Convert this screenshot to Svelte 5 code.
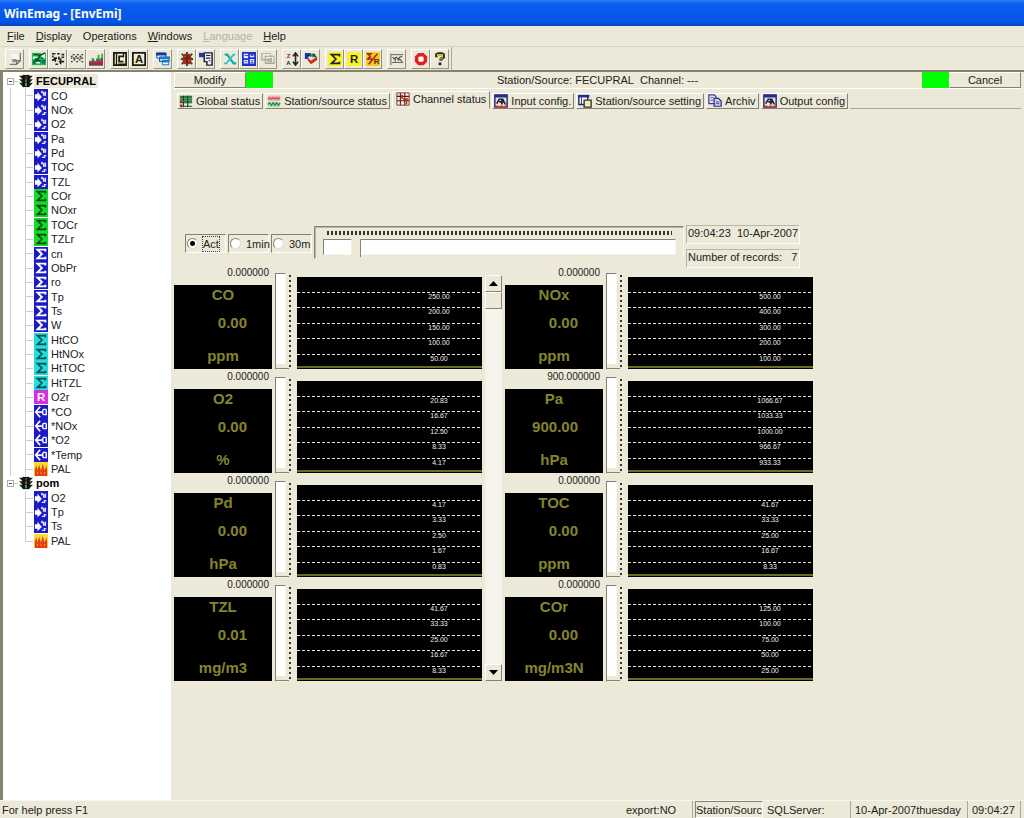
<script lang="ts">
  type Shape = { d?: string; fill?: string; stroke?: string; w?: number; t?: string; x?: number; y?: number; size?: number };

  // all icons are drawn on a 16x16 grid
  const icons: Record<string, Shape[]> = {
    page: [
      { d: 'M3 2H14V11L11 14H3Z', fill: '#f6f4ec' },
      { d: 'M14 1V10L10 14H2M10 14V10H14', stroke: '#555', w: 1.2 },
      { d: 'M4 9H8V11H5M8 10L10 9', stroke: '#777', w: 1.5 }
    ],
    station: [
      { d: 'M0 1H16V15H0Z', fill: '#1fb84c' },
      { d: 'M1 5H6V8H1ZM10 1H15V7H11ZM5 11H9V13H5Z', fill: '#e2f8e4' },
      { d: 'M2 3H7L9 5L7 8H4V10H10M9 4L15 1M10 7H13', stroke: '#074a24', w: 1.6 },
      { d: 'M11 9H15V13H11ZM1 10H4V14H1Z', fill: '#0e6b6b' }
    ],
    nodes: [
      { d: 'M1 2H5M7 2H10M12 3H15M1 5H3M1 9H5V11M3 7H7M9 5V8H12M9 11H15M11 9V14M5 14H8M12 6H15', stroke: '#222', w: 1.8 }
    ],
    waves: [
      { d: 'M1 5H3M3 3H5M6 5H8M8 3H10M11 5H13M13 3H15M1 7H15M1 11H3M4 9H6M7 11H9M10 9H12M13 11H15', stroke: '#333', w: 1.6 },
      { d: 'M3 6V8M7 6V8M11 6V8', stroke: '#ece9d8', w: 1 }
    ],
    chart: [
      { d: 'M0 14V10H3V7H6V10H8V7H10V3H12V7H14V2H16V14Z', fill: '#2fae3b' },
      { d: 'M0 15V11H4V9H6V11H9V8H11V10H14V7H16V15Z', fill: '#a8285c' },
      { d: 'M0 15H16', stroke: '#444', w: 1 }
    ],
    floppy: [
      { d: 'M1 1H15V15H1Z', fill: '#f1eecb', stroke: '#1c1c14', w: 2 },
      { d: 'M4 1V15M12 1V6', stroke: '#1c1c14', w: 1.5 },
      { d: 'M12 5H7V11H12M6 14H14', stroke: '#1c1c14', w: 2 }
    ],
    floppyA: [
      { d: 'M1 1H15V15H1Z', fill: '#f1eecb', stroke: '#1c1c14', w: 2 },
      { t: 'A', x: 8, y: 13, size: 13, fill: '#1c1c14' }
    ],
    cascade: [
      { d: 'M1 1H11V7H1Z', fill: '#fff', stroke: '#113b9b', w: 1 },
      { d: 'M0 1H12V4H0Z', fill: '#113b9b' },
      { d: 'M4 6H15V11H4Z', fill: '#8fe2ef', stroke: '#113b9b', w: 1 },
      { d: 'M4 5H16V8H4ZM7 9H15V15H7Z', fill: '#1a7bca' },
      { d: 'M8 13H14', stroke: '#e8ffff', w: 2 }
    ],
    bug: [
      { d: 'M2 2L5 5M14 2L11 5M1 8H15M2 14L5 11M14 14L11 11M8 0V16', stroke: '#263b18', w: 2 },
      { d: 'M5 2H11L13 6V11L11 14H5L3 11V6Z', fill: '#b32418' },
      { d: 'M8 4V13M4 7H12', stroke: '#293b19', w: 1.6 },
      { d: 'M5 5H6V6H5ZM10 9H11V10H10Z', fill: '#f99' }
    ],
    list: [
      { d: 'M6 1H15V15H9V11H6Z', fill: '#eee', stroke: '#223', w: 1.7 },
      { d: 'M8 4H13M8 7H13M11 10H13', stroke: '#225', w: 1.4 },
      { d: 'M0 1H6V6H0Z', fill: '#2239a8' }
    ],
    cross: [
      { d: 'M2 3H5L12 13H15', stroke: '#17a8b6', w: 2.6 },
      { d: 'M14 3H12L4 13H1', stroke: '#2fc4cc', w: 2 }
    ],
    tables: [
      { d: 'M0 0H16V16H0Z', fill: '#1d31cd' },
      { d: 'M2 2H7V7H2ZM9 3H14V6H9ZM2 9H7V13H2ZM9 8H14V13H9Z', fill: '#e8ebff' },
      { d: 'M3 4H7M10 4H13M3 11H6M10 10H13M10 12H13', stroke: '#1d31cd', w: 1 }
    ],
    windows: [
      { d: 'M1 2H11V9H1ZM5 5H15V13H5ZM8 8H12V11H8Z', stroke: '#aaa797', w: 1.3 },
      { d: 'M2 3H12M6 6H16', stroke: '#fff', w: 0.7 }
    ],
    sort: [
      { t: 'Z', x: 4, y: 6.5, size: 7, fill: '#8c1818' },
      { t: 'A', x: 4, y: 14.5, size: 7, fill: '#1c1c39' },
      { d: 'M12 1V15M9 5L12 1L15 5M9 11L12 15L15 11', stroke: '#222', w: 1.8 }
    ],
    swap: [
      { d: 'M1 1H8V5H5V8H1Z', fill: '#1938bb' },
      { d: 'M6 2H13V6L9 6Z', fill: '#1b9b48' },
      { d: 'M4 9L8 14L15 9V5L8 10L5 7Z', fill: '#d62424' },
      { d: 'M10 2L14 6M3 4H6', stroke: '#111', w: 1.2 }
    ],
    sigmaYellow: [
      { d: 'M0 0H16V16H0Z', fill: '#f9f522' },
      { d: 'M13 5V3H4L9 8L4 13H13V11', stroke: '#222', w: 2 }
    ],
    rYellow: [
      { d: 'M0 0H16V16H0Z', fill: '#f9f522' },
      { t: 'R', x: 8, y: 13, size: 13, fill: '#222' }
    ],
    ratio: [
      { d: 'M0 0H16V16H0Z', fill: '#f9c922' },
      { d: 'M7 2H2L5 5L2 8H7M3 14L13 2', stroke: '#a02416', w: 1.8 },
      { t: 'R', x: 12, y: 14, size: 9, fill: '#5a1c10' }
    ],
    graph: [
      { d: 'M1 2V15M1 3H15M2 12H15', stroke: '#555', w: 1 },
      { d: 'M3 6L5 8L7 6L9 8L11 6L14 5M6 6V11M9 10L11 8L14 11', stroke: '#555', w: 1.3 }
    ],
    stop: [
      { d: 'M5 1H11L15 5V11L11 15H5L1 11V5Z', fill: '#e3211c' },
      { d: 'M6 5H10L11 6V10L10 11H6L5 10V6Z', fill: '#fff' }
    ],
    help: [
      { d: 'M4 6V3L6 2H10L12 3V6L9 8V10M8 12V15', stroke: '#2b2b10', w: 3.2 },
      { d: 'M5 5V3H11V6L9 8V9', stroke: '#c9c42a', w: 1.2 }
    ],
    tabGlobal: [
      { d: 'M1 2H15V14H1Z', fill: '#e9efe5' },
      { d: 'M1 2H15V5H1ZM5 7H15V9H5Z', fill: '#1f8137' },
      { d: 'M1 7H4V10H1ZM1 12H4V15H1Z', fill: '#b72020' },
      { d: 'M5 2V15M10 2V15M1 6H15M1 10H15M4 14H15', stroke: '#1a4525', w: 1.3 }
    ],
    tabStation: [
      { d: 'M1 2H15V8H1Z', fill: '#efb7b3' },
      { d: 'M1 9H15V15H1Z', fill: '#b6dfc2' },
      { d: 'M1 6L3 4L5 6L7 4L9 6L11 4L13 6L15 4', stroke: '#cc4e4e', w: 1.4 },
      { d: 'M1 12L3 10L5 13L7 10L9 13L11 10L13 13L15 10', stroke: '#208b50', w: 1.5 }
    ],
    tabChannel: [
      { d: 'M1 1H15V15H1Z', fill: '#f5eee6', stroke: '#7b2a20', w: 1 },
      { d: 'M5 1V15M10 1V15M1 5H15M1 10H15', stroke: '#4b1d18', w: 1.2 },
      { d: 'M7 3V8M8 8H14M12 8V14', stroke: '#c5281c', w: 1.8 }
    ],
    tabInput: [
      { d: 'M1 1H15V15H1Z', fill: '#e5e3ee', stroke: '#1d236b', w: 1.6 },
      { d: 'M1 1H15V4H1Z', fill: '#1d2d9b' },
      { d: 'M3 11L6 6H10L13 12M6 9H11M9 6V12', stroke: '#232323', w: 1.9 },
      { d: 'M2 13H5V16H2ZM7 13H10V16H7ZM12 13H15V16H12Z', fill: '#c73624' }
    ],
    tabSetting: [
      { d: 'M1 2H11V12H1Z', fill: '#fff', stroke: '#1d236b', w: 1.6 },
      { d: 'M0 1H13V4H0Z', fill: '#1d2d9b' },
      { d: 'M7 7H15V15H7Z', fill: '#f2ecb0', stroke: '#333', w: 1.6 },
      { d: 'M4 4V12', stroke: '#1d236b', w: 1 }
    ],
    tabArchiv: [
      { d: 'M1 1H7L9 3V11H1Z', fill: '#e2e5ff', stroke: '#3a3d86', w: 1.4 },
      { d: 'M7 5H12L15 8V14H7Z', fill: '#cfd4fa', stroke: '#2a2d76', w: 1.4 },
      { d: 'M3 4H6M3 7H6M9 9H13M9 11H13', stroke: '#3a3d86', w: 1 }
    ],
    light: [
      { d: 'M0 2H16L12 6H16L12 10H16L12 14H4L0 10H4L0 6H4Z', fill: '#1a241a' },
      { d: 'M4 1H12V15H4Z', fill: '#111' },
      { d: 'M7 2H9V5H7Z', fill: '#8c2222' },
      { d: 'M7 6H9V9H7Z', fill: '#77742a' },
      { d: 'M7 10H9V14H7Z', fill: '#35c04a' }
    ],
    input: [
      { d: 'M0 0H16V16H0Z', fill: '#1a1ac8' },
      { d: 'M1 6H4V3L9 9L4 14V11H1Z', fill: '#fff' },
      { d: 'M9 2V4H11V7H13V3M9 13H12V11H14', stroke: '#dfe2ff', w: 1.7 }
    ],
    output: [
      { d: 'M0 0H16V16H0Z', fill: '#1a1ac8' },
      { d: 'M7 2L2 8L7 14M3 8H9', stroke: '#fff', w: 2 },
      { d: 'M14 5H11L10 6V10L11 11H14V5', stroke: '#fff', w: 1.6 }
    ],
    sumGreen: [
      { d: 'M0 0H16V16H0Z', fill: '#12dc2a' },
      { d: 'M13 5V3H4L9 8L4 13H13V11', stroke: '#084a12', w: 2 }
    ],
    sumBlue: [
      { d: 'M0 0H16V16H0Z', fill: '#1a1ac8' },
      { d: 'M13 5V3H4L9 8L4 13H13V11', stroke: '#fff', w: 2.2 }
    ],
    sumCyan: [
      { d: 'M0 0H16V16H0Z', fill: '#1fdfdc' },
      { d: 'M13 5V3H4L9 8L4 13H13V11', stroke: '#0b4b52', w: 2 }
    ],
    ref: [
      { d: 'M0 0H16V16H0Z', fill: '#d92be0' },
      { t: 'R', x: 8, y: 13, size: 13, fill: '#fff' }
    ],
    fire: [
      { d: 'M0 0H16V16H0Z', fill: '#ffd92e' },
      { d: 'M1 16V8L3 4L4 10L6 3L8 10L10 2L12 10L14 4L15 9V16Z', fill: '#e23a12' },
      { d: 'M4 14V11M8 14V11M12 14V11', stroke: '#ff9a1c', w: 1.2 }
    ]
  };

  const menus = [
    { pre: '', key: 'F', post: 'ile' },
    { pre: '', key: 'D', post: 'isplay' },
    { pre: 'Ope', key: 'r', post: 'ations' },
    { pre: '', key: 'W', post: 'indows' },
    { pre: '', key: 'L', post: 'anguage', disabled: true },
    { pre: '', key: 'H', post: 'elp' }
  ];

  const toolGroups = [
    ['page'],
    ['station', 'nodes', 'waves', 'chart'],
    ['floppy', 'floppyA'],
    ['cascade'],
    ['bug', 'list'],
    ['cross', 'tables', 'windows'],
    ['sort', 'swap'],
    ['sigmaYellow', 'rYellow', 'ratio'],
    ['graph'],
    ['stop', 'help']
  ];

  const kids = (icon: string, names: string) => names.split(' ').map((name) => ({ name, icon, root: false, last: false }));

  const tree = [
    { name: 'FECUPRAL', icon: 'light', root: true, last: false },
    ...kids('input', 'CO NOx O2 Pa Pd TOC TZL'),
    ...kids('sumGreen', 'COr NOxr TOCr TZLr'),
    ...kids('sumBlue', 'cn ObPr ro Tp Ts W'),
    ...kids('sumCyan', 'HtCO HtNOx HtTOC HtTZL'),
    ...kids('ref', 'O2r'),
    ...kids('output', '*CO *NOx *O2 *Temp'),
    ...kids('fire', 'PAL'),
    { name: 'pom', icon: 'light', root: true, last: true },
    ...kids('input', 'O2 Tp Ts').map((k) => ({ ...k, last: true })),
    ...kids('fire', 'PAL').map((k) => ({ ...k, last: true }))
  ];

  const tabs = [
    { label: 'Global status', icon: 'tabGlobal' },
    { label: 'Station/source status', icon: 'tabStation' },
    { label: 'Channel status', icon: 'tabChannel' },
    { label: 'Input config.', icon: 'tabInput' },
    { label: 'Station/source setting', icon: 'tabSetting' },
    { label: 'Archiv', icon: 'tabArchiv' },
    { label: 'Output config', icon: 'tabInput' }
  ];

  const columns = [
    [
      { name: 'CO', value: '0.00', unit: 'ppm', top: '0.000000', scale: ['250.00', '200.00', '150.00', '100.00', '50.00'] },
      { name: 'O2', value: '0.00', unit: '%', top: '0.000000', scale: ['20.83', '16.67', '12.50', '8.33', '4.17'] },
      { name: 'Pd', value: '0.00', unit: 'hPa', top: '0.000000', scale: ['4.17', '3.33', '2.50', '1.67', '0.83'] },
      { name: 'TZL', value: '0.01', unit: 'mg/m3', top: '0.000000', scale: ['41.67', '33.33', '25.00', '16.67', '8.33'] }
    ],
    [
      { name: 'NOx', value: '0.00', unit: 'ppm', top: '0.000000', scale: ['500.00', '400.00', '300.00', '200.00', '100.00'] },
      { name: 'Pa', value: '900.00', unit: 'hPa', top: '900.000000', scale: ['1066.67', '1033.33', '1000.00', '966.67', '933.33'] },
      { name: 'TOC', value: '0.00', unit: 'ppm', top: '0.000000', scale: ['41.67', '33.33', '25.00', '16.67', '8.33'] },
      { name: 'COr', value: '0.00', unit: 'mg/m3N', top: '0.000000', scale: ['125.00', '100.00', '75.00', '50.00', '25.00'] }
    ]
  ];

  const lineY = [15, 30, 46, 61, 77];

  let activeTab = $state('Channel status');
  let period = $state('Act');
  let position = $state(8);
</script>

{#snippet icon(name: string)}
  <svg class="icon" viewBox="0 0 16 16" aria-hidden="true">
    {#each icons[name] as s}
      {#if s.t}
        <text x={s.x} y={s.y} font-size={s.size} fill={s.fill} text-anchor="middle" font-weight="bold">{s.t}</text>
      {:else}
        <path d={s.d} fill={s.fill ?? 'none'} stroke={s.stroke ?? 'none'} stroke-width={s.w ?? 0} />
      {/if}
    {/each}
  </svg>
{/snippet}

{#snippet channel(c: (typeof columns)[0][0])}
  <article class="channel">
    <div class="side">
      <span class="top">{c.top}</span>
      <div class="readout">
        <span class="name">{c.name}</span>
        <span class="value">{c.value}</span>
        <span class="unit">{c.unit}</span>
      </div>
    </div>
    <div class="level">
      <input type="range" min="0" max="100" value="0" aria-label={c.name} />
      <span class="ticks"></span>
    </div>
    <svg class="plot" viewBox="0 0 185 92">
      {#each c.scale as label, i}
        <line x1="0" x2="185" y1={lineY[i] + 0.5} y2={lineY[i] + 0.5} stroke="#e4e4e4" stroke-dasharray="3 2" />
        <text x="142" y={lineY[i] + 7}>{label}</text>
      {/each}
      <line x1="0" x2="185" y1="90" y2="90" stroke="#6b6b22" stroke-width="2" />
    </svg>
  </article>
{/snippet}

<div class="app">
  <header class="title">WinEmag - [EnvEmi]</header>

  <nav class="menu">
    {#each menus as m}
      <button disabled={m.disabled}>{m.pre}<u>{m.key}</u>{m.post}</button>
    {/each}
  </nav>

  <div class="toolbar">
    {#each toolGroups as group}
      <div class="group">
        {#each group as name}
          <button aria-label={name}>{@render icon(name)}</button>
        {/each}
      </div>
    {/each}
  </div>

  <div class="body">
    <aside>
      <ul class="tree">
        {#each tree as node, i}
          <li class:root={node.root} class:last={node.last}>
            {#if node.root}<button class="expander" aria-label="collapse"></button>{/if}
            {@render icon(node.icon)}
            <span class:selected={i === 0}>{node.name}</span>
          </li>
        {/each}
      </ul>
    </aside>

    <main>
      <div class="bar">
        <button class="modify">Modify</button>
        <span class="lamp"></span>
        <span class="source">Station/Source: FECUPRAL&nbsp; Channel: ---</span>
        <span class="lamp"></span>
        <button class="cancel">Cancel</button>
      </div>

      <div class="tabs">
        {#each tabs as tab}
          <button class:active={activeTab === tab.label} onclick={() => (activeTab = tab.label)}>
            {@render icon(tab.icon)}{tab.label}
          </button>
        {/each}
        <span class="rest"></span>
      </div>

      <section class="controls">
        <div class="periods">
          {#each ['Act', '1min', '30m'] as p}
            <label><input type="radio" name="period" value={p} bind:group={period} /><span class:focus={period === p}>{p}</span></label>
          {/each}
        </div>
        <div class="timeline">
          <span class="ticks"></span>
          <input type="range" min="0" max="100" bind:value={position} aria-label="Record" />
        </div>
        <div class="info">
          <span>09:04:23&nbsp; 10-Apr-2007</span>
          <span>Number of records:&nbsp;&nbsp; 7</span>
        </div>
      </section>

      <section class="monitor">
        <div class="column">
          {#each columns[0] as c}{@render channel(c)}{/each}
        </div>
        <div class="scroll">
          <button aria-label="up"><svg viewBox="0 0 9 5"><path d="M4.500 0L9 5H0Z" /></svg></button>
          <button aria-label="thumb"></button>
          <span></span>
          <button aria-label="down"><svg viewBox="0 0 9 5"><path d="M0 0H9L4.500 5Z" /></svg></button>
        </div>
        <div class="column">
          {#each columns[1] as c}{@render channel(c)}{/each}
        </div>
      </section>
    </main>
  </div>

  <footer>
    <span class="hint">For help press F1</span>
    <span class="export">export:NO</span>
    <span class="station">Station/Sourc</span>
    <span class="server">SQLServer:</span>
    <span class="date">10-Apr-2007thuesday</span>
    <span class="time">09:04:27</span>
  </footer>
</div>

<style>
  :global(body) {
    background: #ece9d8;
  }
  .app {
    display: flex;
    flex-direction: column;
    min-height: 100vh;
    background: #ece9d8;
    color: #222;
    font: 11px/14px 'Liberation Sans', Arial, sans-serif;
  }
  button {
    padding: 0;
    border: 0;
    background: none;
    color: inherit;
    font: inherit;
  }
  .icon {
    flex: none;
    width: 14px;
    height: 14px;
  }

  .title {
    height: 26px;
    padding-left: 4px;
    background: linear-gradient(#2a80f5, #0a5cf0 15%, #0556e6 80%, #0348c4);
    color: #fff;
    font: bold 12px/27px 'Noto Sans', sans-serif;
  }
  .menu {
    display: flex;
    gap: 11px;
    height: 20px;
    padding-left: 7px;
    border-bottom: 1px solid #dad6c5;
  }
  .menu button:disabled {
    color: #b5b2a2;
  }

  .toolbar {
    display: flex;
    gap: 5px;
    width: 446px;
    height: 20px;
    padding: 2px 0 1px 5px;
    border-right: 1px solid #aca899;
  }
  .group {
    display: flex;
  }
  .group button {
    display: flex;
    align-items: center;
    justify-content: center;
    width: 19px;
    height: 20px;
    border: 1px solid;
    border-color: #fff #96937f #96937f #fff;
  }

  .body {
    display: flex;
    flex: 1;
    border-top: 2px solid #85826f;
  }
  aside {
    width: 168px;
    border-left: 3px solid #85826f;
    background: #fff;
  }
  .tree {
    display: grid;
    grid-template-rows: repeat(33, 1fr);
    height: 474px;
    margin: 0;
    padding: 2px 0 0;
    list-style: none;
  }
  .tree li {
    display: flex;
    align-items: center;
    gap: 3px;
    padding-left: 31px;
    background:
      linear-gradient(#ccc, #ccc) 7px 0 / 1px 100% no-repeat,
      linear-gradient(#ccc, #ccc) 22px 0 / 1px 100% no-repeat,
      linear-gradient(#ccc, #ccc) 22px 7px / 8px 1px no-repeat;
  }
  .tree li.last {
    background:
      linear-gradient(#ccc, #ccc) 22px 0 / 1px 100% no-repeat,
      linear-gradient(#ccc, #ccc) 22px 7px / 8px 1px no-repeat;
  }
  .tree li:last-child {
    background:
      linear-gradient(#ccc, #ccc) 22px 0 / 1px 50% no-repeat,
      linear-gradient(#ccc, #ccc) 22px 7px / 8px 1px no-repeat;
  }
  .tree li.root {
    padding-left: 4px;
    background: linear-gradient(#ccc, #ccc) 7px 7px / 8px 1px no-repeat;
    color: #000;
    font-weight: bold;
  }
  .expander {
    width: 7px;
    height: 7px;
    margin-right: 2px;
    border: 1px solid #aaa;
    background: linear-gradient(#444, #444) center / 3px 1px no-repeat #fff;
  }
  .selected {
    padding: 0 2px;
    margin-left: -2px;
    background: #ece9d8;
  }

  main {
    flex: 1;
    min-width: 0;
    padding: 0 3px;
  }
  .bar {
    display: flex;
    height: 16px;
    border-bottom: 1px solid #fff;
  }
  .bar button {
    width: 72px;
    border: 1px solid;
    border-color: #fff #85826f #85826f #fff;
    line-height: 14px;
  }
  .lamp {
    width: 27px;
    background: #0f0;
  }
  .source {
    flex: 1;
    line-height: 16px;
    text-align: center;
  }

  .tabs {
    display: flex;
    align-items: flex-end;
    height: 20px;
    padding-left: 3px;
  }
  .tabs button {
    display: flex;
    align-items: center;
    gap: 3px;
    height: 16px;
    margin-right: 2px;
    padding: 0 2px 0 1px;
    border: 1px solid;
    border-color: #fff #85826f #85826f #fff;
    white-space: nowrap;
  }
  .tabs button.active {
    height: 18px;
    padding: 0 3px 2px;
    border-bottom-color: #ece9d8;
  }
  .rest {
    flex: 1;
    border-bottom: 1px solid #aca899;
  }

  .controls {
    display: flex;
    gap: 2px;
    height: 42px;
    padding: 116px 0 0 11px;
  }
  .periods {
    display: flex;
    gap: 2px;
    padding-top: 9px;
  }
  .periods label {
    display: flex;
    align-items: center;
    gap: 5px;
    width: 38px;
    height: 17px;
    padding-left: 1px;
    border: 1px solid;
    border-color: #85826f #fff #fff #85826f;
    white-space: nowrap;
  }
  .periods input {
    appearance: none;
    flex: none;
    width: 11px;
    height: 11px;
    margin: 0;
    border: 1px solid;
    border-color: #85826f #e0dccb #e0dccb #85826f;
    border-radius: 50%;
    background: #fff;
  }
  .periods input:checked {
    background: radial-gradient(#000 2px, #fff 3px);
  }
  .focus {
    outline: 1px dotted #444;
  }
  .timeline {
    display: flex;
    flex-direction: column;
    width: 353px;
    height: 31px;
    margin-top: 1px;
    padding: 0 7px 0 8px;
    border: 1px solid;
    border-color: #85826f #f7f5ec transparent #85826f;
    box-shadow: inset 1px 1px #b9b6a5;
  }
  .timeline .ticks {
    height: 4px;
    margin: 4px 4px 1px;
    background: linear-gradient(90deg, #333 2px, transparent 2px) 0 0 / 4px 4px space;
  }
  .timeline input {
    appearance: none;
    width: 100%;
    height: 22px;
    margin: 0;
    background: none;
  }
  .timeline input::-webkit-slider-runnable-track {
    height: 16px;
    border: 1px solid;
    border-color: #85826f #f7f5ec #f7f5ec #85826f;
    background: #fff;
  }
  .timeline input::-webkit-slider-thumb {
    appearance: none;
    width: 10px;
    height: 21px;
    margin-top: -4px;
    border-right: 1px solid #85826f;
    background: #ece9d8;
    clip-path: polygon(0 0, 60% 0, 100% 20%, 100% 100%, 0 100%);
  }
  .info {
    display: grid;
    align-content: start;
    gap: 5px;
    width: 114px;
  }
  .info span {
    height: 17px;
    padding-left: 1px;
    border: 1px solid;
    border-color: #b9b6a5 #fff #fff #b9b6a5;
    white-space: nowrap;
  }

  .monitor {
    display: flex;
    gap: 3px;
  }
  .column {
    display: grid;
    gap: 2px;
  }
  .channel {
    display: grid;
    grid-template-columns: 98px 25px 185px;
    height: 102px;
  }
  .side {
    display: flex;
    flex-direction: column;
  }
  .top {
    height: 18px;
    padding-right: 3px;
    font-size: 10px;
    line-height: 12px;
    text-align: right;
  }
  .readout {
    display: flex;
    flex-direction: column;
    justify-content: space-between;
    height: 84px;
    background: #000;
    color: #85852c;
    font: bold 15px/20px 'Liberation Sans', Arial, sans-serif;
    text-align: center;
  }
  .value {
    padding: 0 25px 2px;
    text-align: right;
  }
  .unit {
    line-height: 26px;
  }
  .level {
    display: flex;
    gap: 2px;
    padding: 6px 0 0 2px;
  }
  .level input {
    appearance: none;
    writing-mode: vertical-lr;
    direction: rtl;
    width: 13px;
    height: 97px;
    margin: 0;
    background: none;
  }
  .level input::-webkit-slider-runnable-track {
    width: 11px;
    border: 1px solid;
    border-color: #85826f #f7f5ec #f7f5ec #85826f;
    background: #fff;
  }
  .level input::-webkit-slider-thumb {
    appearance: none;
    width: 13px;
    height: 5px;
    border-bottom: 1px solid #85826f;
    background: #ece9d8;
  }
  .level .ticks {
    width: 2px;
    height: 94px;
    margin-top: 2px;
    background: linear-gradient(#333 2px, transparent 2px) 0 0 / 2px 5px;
  }
  .plot {
    width: 185px;
    height: 92px;
    margin-top: 10px;
    background: #000;
  }
  .plot text {
    fill: #eee;
    font-size: 7px;
    text-anchor: middle;
  }
  .scroll {
    display: flex;
    flex-direction: column;
    width: 17px;
    margin-top: 8px;
    background: #f5f4ec;
  }
  .scroll span {
    flex: 1;
  }
  .scroll button {
    display: flex;
    align-items: center;
    justify-content: center;
    height: 17px;
    border: 1px solid;
    border-color: #fff #85826f #85826f #fff;
    background: #ece9d8;
  }
  .scroll svg {
    width: 9px;
    height: 5px;
  }

  footer {
    display: flex;
    gap: 2px;
    height: 17px;
    padding-right: 3px;
    border-top: 1px solid #f7f5ec;
  }
  footer span {
    overflow: hidden;
    padding: 2px 0 0 2px;
    border-right: 1px solid #aca899;
    white-space: nowrap;
  }
  footer .hint {
    flex: 1;
    border: 0;
  }
  footer .export {
    width: 66px;
  }
  footer .station {
    width: 66px;
    border: 1px solid;
    border-color: #85826f #fff #fff #85826f;
    padding: 1px 0 0;
  }
  footer .server {
    width: 83px;
  }
  footer .date {
    width: 112px;
  }
  footer .time {
    width: 48px;
  }
</style>
